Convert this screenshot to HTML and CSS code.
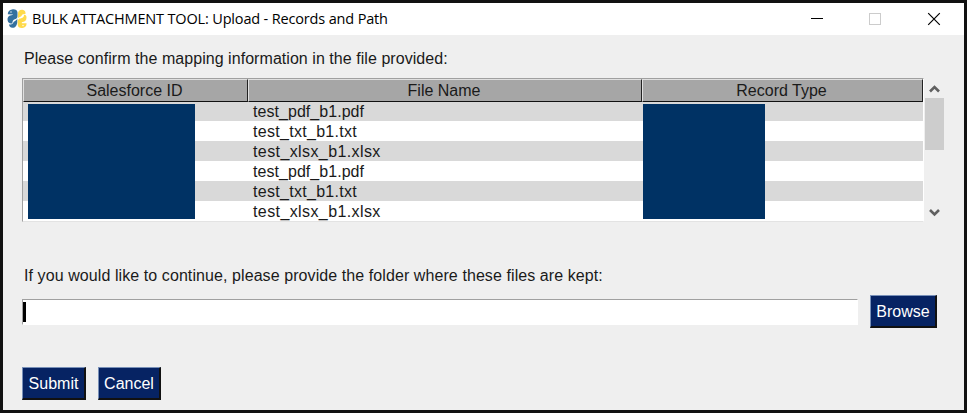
FILE: index.html
```html
<!DOCTYPE html>
<html lang="en">
<head>
<meta charset="utf-8">
<title>BULK ATTACHMENT TOOL</title>
<link rel="stylesheet" href="styles.css">
</head>
<body>
<div class="window">
  <header class="titlebar">
    <svg class="logo" width="20" height="20" viewBox="0 0 20 20">
      <path fill="#34709f" d="M5 .5C7.500 0 10.300.6 10.500 3.500V7C10.500 9.800 8.300 10 6.800 10.800C5.500 11.600 5.700 13 5.300 14.200C3.500 15 1.200 14 .7 11.800C.2 9.800.7 8 2 7C3.300 6 5.400 6.300 6.200 5.500L.8 5.300C.7 2.500 2.500.8 5 .5Z M6.500 13C8 11.600 9.600 11.200 10.300 9.400V13.500C9.800 16.500 8.500 18.800 5.500 18.800C3.300 18.600 1.900 17 2.100 15.200C4.300 15.800 6.200 15 6.500 13Z"/>
      <path fill="#ffda4b" d="M11 4.800C11 2 12.800.6 15.400.8C17.700 1 18.800 2.600 18.500 5C16.300 4.600 14.800 5.500 14.500 7C13 8 11.600 8.300 10.900 9.300Z M17 5.700C18.900 5.600 19.700 7 19.500 9C19.400 11.800 17.600 12.500 14.800 13.300V14.200H19.600C19.600 17 18.200 18.800 15.400 19C12.500 19.200 10.700 18 10.700 15.200V12C11 9.500 13 9.500 14.800 8.900C16.500 8.300 17 7.400 17 5.700Z"/>
      <circle cx="4" cy="3" r=".7" fill="#fff"/><circle cx="16" cy="16.500" r=".7" fill="#fff"/>
    </svg>
    <h1 class="title">BULK ATTACHMENT TOOL: Upload - Records and Path</h1>
    <svg class="controls" width="126" height="14" viewBox="0 0 126 14" fill="none" shape-rendering="crispEdges">
      <path stroke="#000" d="M0 6.500H12"/>
      <rect x="58.500" y="1.500" width="11" height="11" stroke="#ccc"/>
      <path stroke="#000" stroke-width="1.200" shape-rendering="auto" d="M117.200 1.200L128.800 12.800M128.800 1.200L117.200 12.800"/>
    </svg>
  </header>
  <main class="content">
    <p class="label confirm">Please confirm the mapping information in the file provided:</p>
    <div class="listing">
      <div class="table">
        <div class="row head"><span>Salesforce ID</span><span>File Name</span><span>Record Type</span></div>
        <div class="row pdf"><span></span><span>test_pdf_b1.pdf</span><span></span></div>
        <div class="row txt"><span></span><span>test_txt_b1.txt</span><span></span></div>
        <div class="row xlsx"><span></span><span>test_xlsx_b1.xlsx</span><span></span></div>
        <div class="row pdf"><span></span><span>test_pdf_b1.pdf</span><span></span></div>
        <div class="row txt"><span></span><span>test_txt_b1.txt</span><span></span></div>
        <div class="row xlsx"><span></span><span>test_xlsx_b1.xlsx</span><span></span></div>
        <div class="mask mask-id"></div>
        <div class="mask mask-type"></div>
      </div>
      <div class="scrollbar">
        <svg width="19" height="20" viewBox="0 0 19 20"><path fill="none" stroke="#606060" stroke-width="2.600" d="M5 13.500L9.500 9L14 13.500"/></svg>
        <div class="thumb"></div>
        <svg width="19" height="20" viewBox="0 0 19 20"><path fill="none" stroke="#606060" stroke-width="2.600" d="M5 8L9.500 12.500L14 8"/></svg>
      </div>
    </div>
    <p class="label folder">If you would like to continue, please provide the folder where these files are kept:</p>
    <div class="path">
      <div class="input"><span class="caret"></span></div>
      <button class="button browse">Browse</button>
    </div>
    <div class="actions">
      <button class="button submit">Submit</button>
      <button class="button cancel">Cancel</button>
    </div>
  </main>
</div>
</body>
</html>
```
FILE: styles.css
```css
* { box-sizing: border-box; }
body { margin: 0; font: 16px "Liberation Sans", Arial, sans-serif; color: #1a1a1a; }
.window { width: 967px; height: 413px; border: 3px solid #111; background: #efefef; overflow: hidden; }
.titlebar { display: flex; align-items: center; height: 32px; padding: 0 24px 0 4px; background: #fff; }
.logo { flex: none; margin-top: -1px; }
.title { flex: 1; margin: 0 0 0 5px; font: 14.500px/30px "Open Sans", sans-serif; letter-spacing: -.16px; color: #000; white-space: nowrap; }
.controls { overflow: visible; margin-right: 3px; }
.content { padding: 0 0 0 19px; }
.label { margin: 0; padding-left: 2px; line-height: 20px; white-space: nowrap; }
.confirm { padding-top: 14px; height: 43px; letter-spacing: .05px; }
.listing { display: flex; height: 144px; }
.table { position: relative; width: 902px; border: 1px solid #a0a0a0; border-right: 1px solid #fff; border-bottom: 1px solid #e3e3e3; }
.row { display: grid; grid-template-columns: 225px 394px 281px; height: 20px; line-height: 22px; background: #fff; }
.row:nth-child(even) { background: #d9d9d9; }
.row span:nth-child(2) { padding-left: 5px; }
.pdf { letter-spacing: .05px; }
.txt { letter-spacing: .3px; }
.xlsx { letter-spacing: .4px; }
.row.head { height: 22px; background: #a6a6a6; text-align: center; }
.row.head span { padding: 0 2px 0 0; line-height: 21px; border: 1px solid; border-color: #e0e0e0 #222 #111 #e0e0e0; }
.mask { position: absolute; top: 25px; height: 115px; background: #003264; }
.mask-id { left: 5px; width: 167px; }
.mask-type { left: 620px; width: 122px; }
.scrollbar { width: 19px; margin-left: 1px; display: flex; flex-direction: column; }
.scrollbar svg { display: block; }
.scrollbar svg:last-child { margin-top: auto; }
.thumb { height: 52px; background: #cdcdcd; }
.folder { padding-top: 44px; height: 73px; letter-spacing: .083px; }
.path { display: flex; align-items: center; gap: 12px; height: 33px; }
.input { width: 836px; height: 26px; background: #fff; border: 1px solid; border-color: #a0a0a0 #fff #fff #a0a0a0; padding: 2px 0 0 0; }
.caret { display: block; width: 3px; height: 20px; background: #000; }
.button { height: 33px; margin: 0; padding: 2px 0 0; font: inherit; color: #fff; background: #062363; border: 1px solid; border-color: #7890b8 #111 #111 #7890b8; border-right-width: 2px; border-bottom-width: 2px; }
.browse { width: 67px; }
.actions { display: flex; gap: 12px; margin-top: 39px; }
.submit { width: 64px; }
.cancel { width: 63px; }
```
